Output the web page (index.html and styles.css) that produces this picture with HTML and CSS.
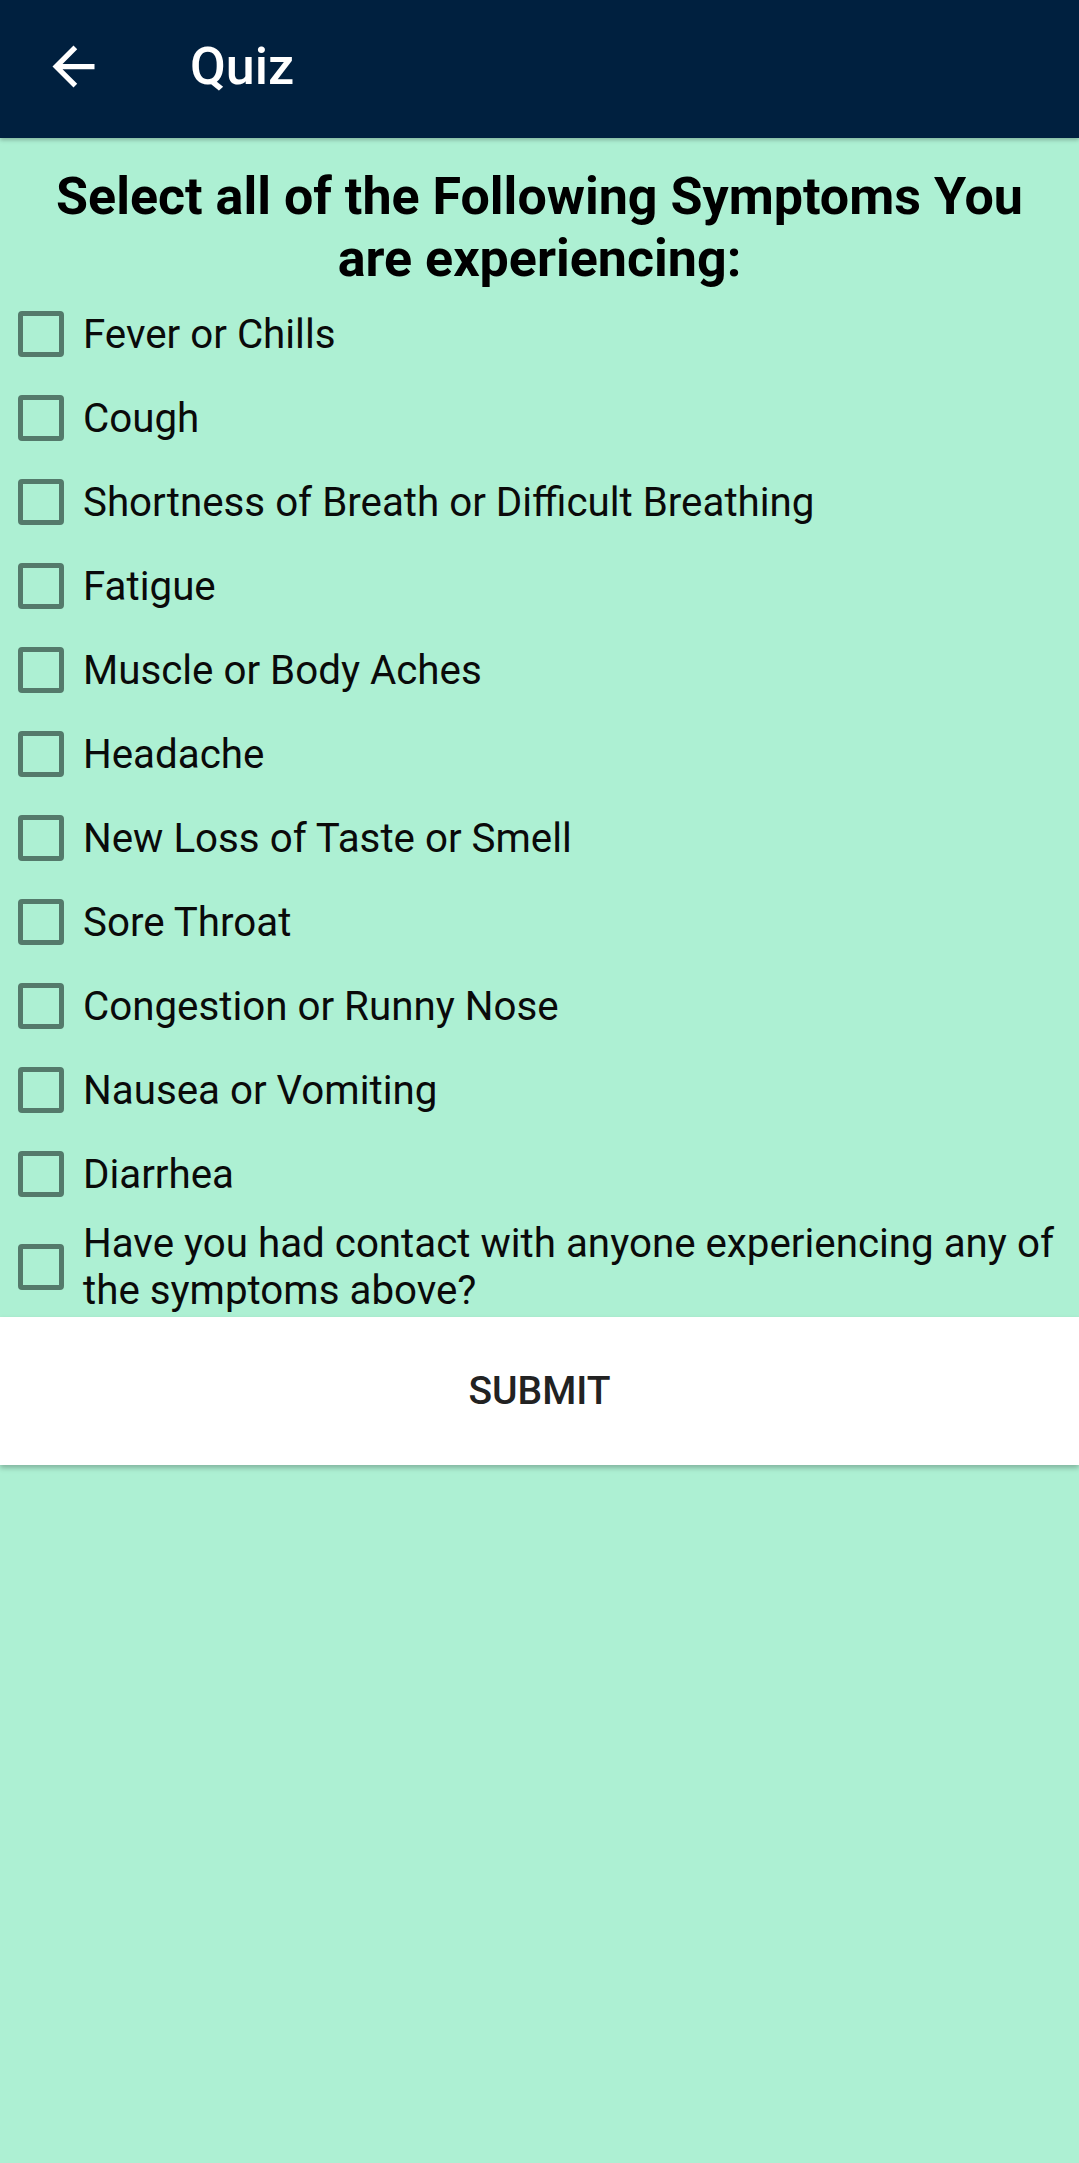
FILE: index.html
```html
<!DOCTYPE html>
<html lang="en">
<head>
<meta charset="utf-8">
<title>Quiz</title>
<link rel="stylesheet" href="styles.css">
</head>
<body>
<div class="screen">
  <header class="appbar">
    <svg class="back" viewBox="0 0 24 24" width="63" height="63" aria-hidden="true">
      <path d="M20 11H7.83l5.59-5.59L12 4l-8 8 8 8 1.41-1.41L7.83 13H20v-2z" fill="#ffffff"/>
    </svg>
    <h1 class="title">Quiz</h1>
  </header>
  <main class="content">
    <h2 class="heading">Select all of the Following Symptoms You are experiencing:</h2>
    <ul class="list">
      <li class="row"><span class="box"></span><span class="label">Fever or Chills</span></li>
      <li class="row"><span class="box"></span><span class="label">Cough</span></li>
      <li class="row"><span class="box"></span><span class="label">Shortness of Breath or Difficult Breathing</span></li>
      <li class="row"><span class="box"></span><span class="label">Fatigue</span></li>
      <li class="row"><span class="box"></span><span class="label">Muscle or Body Aches</span></li>
      <li class="row"><span class="box"></span><span class="label">Headache</span></li>
      <li class="row"><span class="box"></span><span class="label">New Loss of Taste or Smell</span></li>
      <li class="row"><span class="box"></span><span class="label">Sore Throat</span></li>
      <li class="row"><span class="box"></span><span class="label">Congestion or Runny Nose</span></li>
      <li class="row"><span class="box"></span><span class="label">Nausea or Vomiting</span></li>
      <li class="row"><span class="box"></span><span class="label">Diarrhea</span></li>
      <li class="row row-multi"><span class="box"></span><span class="label">Have you had contact with anyone experiencing any of the symptoms above?</span></li>
    </ul>
    <button class="submit" type="button">SUBMIT</button>
  </main>
</div>
</body>
</html>
```
FILE: styles.css
```css
html, body {
  margin: 0;
  padding: 0;
  background: #adf0d3;
}

body {
  font-family: Roboto, "Liberation Sans", Arial, sans-serif;
  width: 1079px;
  min-height: 2163px;
}

.screen {
  display: flex;
  flex-direction: column;
  min-height: 2163px;
  background: #adf0d3;
}

.appbar {
  position: relative;
  z-index: 2;
  height: 138px;
  box-sizing: border-box;
  padding: 0 0 6px 42px;
  display: flex;
  align-items: center;
  background: #00203f;
  box-shadow: 0 2px 4px rgba(0, 0, 0, 0.25);
}

.back {
  flex: none;
  display: block;
}

.title {
  margin: 0 0 0 85px;
  font-size: 52px;
  font-weight: 500;
  color: #ffffff;
  line-height: 61px;
}

.content {
  display: flex;
  flex-direction: column;
}

.heading {
  margin: 28px 20px 0;
  text-align: center;
  font-size: 52px;
  font-weight: 700;
  line-height: 62px;
  color: #000000;
}

.list {
  list-style: none;
  margin: 2px 0 0;
  padding: 0;
}

.row {
  display: flex;
  align-items: center;
  min-height: 84px;
  padding: 0 0 0 18px;
  box-sizing: border-box;
}

.row-multi {
  padding-top: 4px;
  padding-bottom: 3px;
}

.box {
  flex: none;
  width: 46px;
  height: 46px;
  box-sizing: border-box;
  border: 5px solid #547a6b;
  border-radius: 4px;
  margin-right: 19px;
}

.label {
  font-size: 40.3px;
  line-height: 47px;
  color: #0a0a0a;
  padding-right: 8px;
}

.submit {
  display: block;
  width: 100%;
  height: 148px;
  margin: 0;
  border: none;
  background: #ffffff;
  font-family: Roboto, "Liberation Sans", Arial, sans-serif;
  font-size: 39px;
  font-weight: 500;
  color: #222222;
  box-shadow: 0 3px 5px rgba(0, 0, 0, 0.25);
  padding: 0;
}
```
